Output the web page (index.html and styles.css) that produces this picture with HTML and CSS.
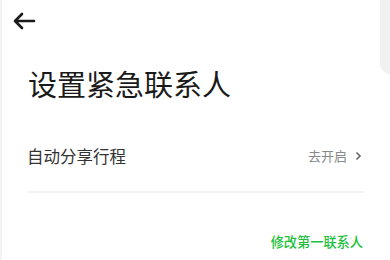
FILE: index.html
```html
<!DOCTYPE html>
<html lang="zh-CN">
<head>
    <meta charset="UTF-8">
    <meta name="viewport" content="width=device-width, initial-scale=1.0">
    <title>设置紧急联系人</title>
    <link rel="stylesheet" href="styles.css">
</head>
<body>
    <div class="page">
        <div class="side-panel"></div>
        <div class="topbar">
            <svg class="back" width="24" height="18" viewBox="0 0 24 18">
                <path d="M10 2 L3 9 L10 16 M3 9 H22" fill="none" stroke="#1a1a1a" stroke-width="2.6" stroke-linecap="round" stroke-linejoin="round"/>
            </svg>
        </div>
        <h1>设置紧急联系人</h1>
        <div class="row">
            <span class="row-label">自动分享行程</span>
            <span class="row-action">去开启
                <svg width="7" height="10" viewBox="0 0 7 10">
                    <path d="M1.5 1.5 L5 5 L1.5 8.5" fill="none" stroke="#666" stroke-width="1.6"/>
                </svg>
            </span>
        </div>
        <div class="footer">
            <a class="edit-link">修改第一联系人</a>
        </div>
    </div>
</body>
</html>
```

FILE: styles.css
```css
body {
    margin: 0;
    font-family: "Noto Sans CJK SC", "Noto Sans", sans-serif;
    background: #fff;
}

.page {
    position: relative;
    width: 390px;
    height: 260px;
    box-sizing: border-box;
    border-left: 2px solid #f3f3f3;
    overflow: hidden;
}

.side-panel {
    position: absolute;
    top: 0;
    right: 0;
    width: 10px;
    height: 74px;
    background: #f1f1f1;
    border-bottom-left-radius: 10px;
}

.topbar {
    height: 42px;
    padding-left: 10px;
    display: flex;
    align-items: center;
}

h1 {
    margin: 21px 0 0 26px;
    font-size: 29px;
    font-weight: 400;
    color: #1a1a1a;
    line-height: 40px;
}

.row {
    margin: 23px 26px 0 25px;
    height: 59px;
    display: flex;
    justify-content: space-between;
    align-items: center;
    border-bottom: 2px solid #f3f3f3;
    padding-bottom: 6px;
}

.row-label {
    font-size: 16.5px;
    color: #333;
}

.row-action {
    display: flex;
    align-items: center;
    gap: 8px;
    font-size: 13px;
    color: #888;
    padding-right: 2px;
}

.footer {
    display: flex;
    justify-content: flex-end;
    padding: 39px 27px 0 0;
}

.edit-link {
    font-size: 13.2px;
    font-weight: 500;
    color: #20bf3c;
}
```
